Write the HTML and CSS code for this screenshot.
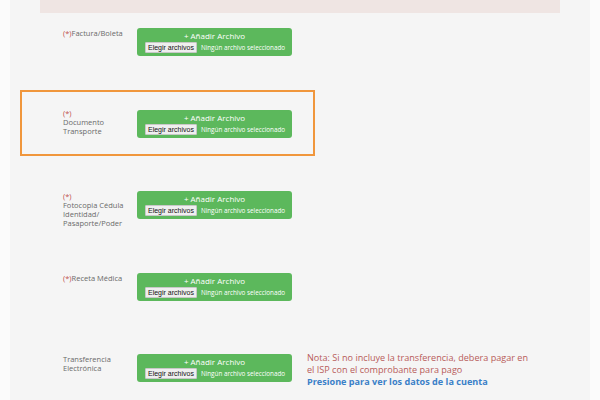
FILE: index.html
```html
<!DOCTYPE html>
<html lang="es">
<head>
    <meta charset="UTF-8">
    <meta name="viewport" content="width=device-width, initial-scale=1.0">
    <title>Documentos</title>
    <link rel="stylesheet" href="styles.css">
</head>
<body>
    <div class="page">
        <div class="panel">
            <div class="top-band"></div>
            <form class="uploads">
                <div class="row">
                    <div class="row-label"><span class="req">(*)</span>Factura/Boleta</div>
                    <div class="upload-box">
                        <div class="upload-title">+ Añadir Archivo</div>
                        <div class="file-line"><span class="file-btn">Elegir archivos</span><span class="file-name">Ningún archivo seleccionado</span></div>
                    </div>
                </div>
                <div class="row highlight">
                    <div class="row-label"><span class="req">(*)</span><br>Documento Transporte</div>
                    <div class="upload-box">
                        <div class="upload-title">+ Añadir Archivo</div>
                        <div class="file-line"><span class="file-btn">Elegir archivos</span><span class="file-name">Ningún archivo seleccionado</span></div>
                    </div>
                </div>
                <div class="row">
                    <div class="row-label"><span class="req">(*)</span><br>Fotocopia Cédula Identidad/ Pasaporte/Poder</div>
                    <div class="upload-box">
                        <div class="upload-title">+ Añadir Archivo</div>
                        <div class="file-line"><span class="file-btn">Elegir archivos</span><span class="file-name">Ningún archivo seleccionado</span></div>
                    </div>
                </div>
                <div class="row">
                    <div class="row-label"><span class="req">(*)</span>Receta Médica</div>
                    <div class="upload-box">
                        <div class="upload-title">+ Añadir Archivo</div>
                        <div class="file-line"><span class="file-btn">Elegir archivos</span><span class="file-name">Ningún archivo seleccionado</span></div>
                    </div>
                </div>
                <div class="row">
                    <div class="row-label">Transferencia Electrónica</div>
                    <div class="upload-box">
                        <div class="upload-title">+ Añadir Archivo</div>
                        <div class="file-line"><span class="file-btn">Elegir archivos</span><span class="file-name">Ningún archivo seleccionado</span></div>
                    </div>
                    <div class="note">
                        <p>Nota: Si no incluye la transferencia, debera pagar en el ISP con el comprobante para pago</p>
                        <a href="#" class="account-link">Presione para ver los datos de la cuenta</a>
                    </div>
                </div>
            </form>
        </div>
    </div>
</body>
</html>
```

FILE: styles.css
```css
html, body {
    margin: 0;
    padding: 0;
    height: 100%;
}
body {
    font-family: "Open Sans", Arial, sans-serif;
    background-color: #fbfbfb;
    overflow: hidden;
}
.page {
    margin: 0 10px;
    height: 100%;
    background-color: #f5f5f5;
}
.panel {
    margin: 0 30px;
}
.top-band {
    height: 13px;
    background-color: #efe5e3;
}
.uploads {
    display: flex;
    flex-direction: column;
    gap: 53.5px;
    padding: 15px 0 0 23px;
}
.row {
    display: flex;
    align-items: flex-start;
    height: 28px;
}
.row.highlight {
    align-self: flex-start;
    margin: -20px 0 -18px -43px;
    padding: 18px 21px 16px 41px;
    border: 2px solid #f0963c;
}
.row-label {
    width: 74px;
    font-size: 7.5px;
    line-height: 9px;
    color: #6a6a6a;
    margin-top: 1px;
}
.highlight .row-label {
    margin-top: -1px;
}
.req {
    color: #c0504d;
}
.upload-box {
    width: 155px;
    height: 28px;
    box-sizing: border-box;
    background-color: #5cb85c;
    border-radius: 3px;
    color: white;
    padding-top: 3px;
}
.upload-title {
    font-size: 8px;
    line-height: 10px;
    text-align: center;
}
.file-line {
    display: flex;
    align-items: center;
    white-space: nowrap;
    margin: 1px 0 0 8px;
}
.file-btn {
    font-family: "Liberation Sans", Arial, sans-serif;
    font-size: 7px;
    line-height: 9px;
    color: #111;
    background-color: #efefef;
    border: 1px solid #c8c8c8;
    border-radius: 1px;
    padding: 0 2px;
}
.file-name {
    font-size: 6.3px;
    margin-left: 4px;
}
.note {
    margin: -2px 0 0 15px;
    width: 226px;
    font-size: 9.1px;
    line-height: 11.5px;
}
.note p {
    margin: 0;
    color: #b85c5a;
}
.account-link {
    display: block;
    margin-top: 1px;
    color: #3a80c8;
    font-weight: bold;
    text-decoration: none;
}
```
